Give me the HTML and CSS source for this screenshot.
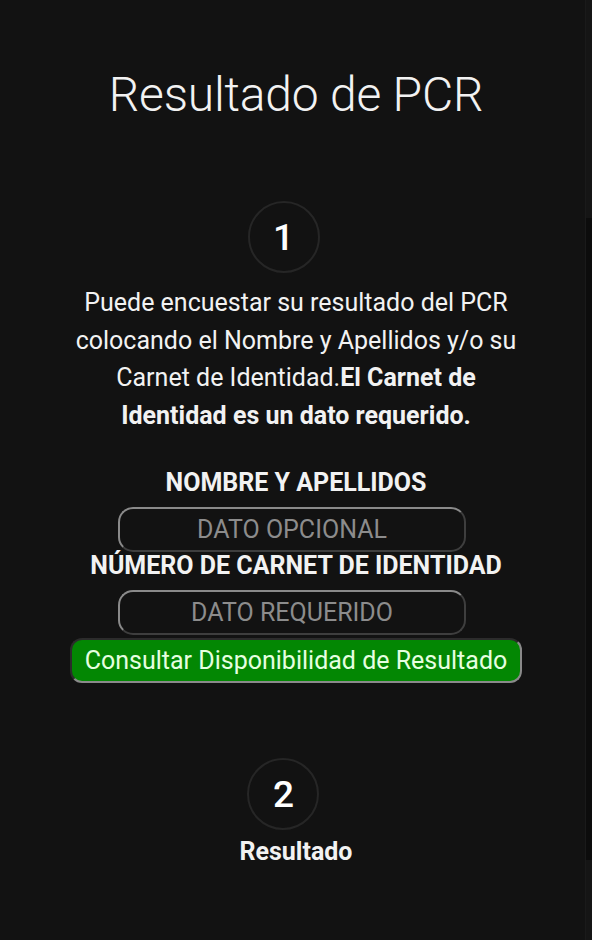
FILE: index.html
```html
<!DOCTYPE html>
<html lang="es">
<head>
    <meta charset="UTF-8">
    <meta name="viewport" content="width=device-width, initial-scale=1.0">
    <title>Resultado de PCR</title>
    <link rel="stylesheet" href="styles.css">
</head>
<body>
    <div class="page">
        <h1 class="title">Resultado de PCR</h1>

        <div class="step">
            <div class="step-number">1</div>
            <p class="intro">Puede encuestar su resultado del PCR colocando el Nombre y Apellidos y/o su Carnet de Identidad.<b>El Carnet de Identidad es un dato requerido.</b></p>

            <form class="search-form">
                <label class="field-label" for="nombre">NOMBRE Y APELLIDOS</label>
                <input class="field" id="nombre" type="text" placeholder="DATO OPCIONAL">
                <label class="field-label" for="carnet">NÚMERO DE CARNET DE IDENTIDAD</label>
                <input class="field" id="carnet" type="text" placeholder="DATO REQUERIDO">
                <button class="button" type="button">Consultar Disponibilidad de Resultado</button>
            </form>
        </div>

        <div class="step step-two">
            <div class="step-number">2</div>
            <h2 class="step-title">Resultado</h2>
        </div>
    </div>
    <div class="scrollbar"><div class="scrollbar-thumb"></div></div>
</body>
</html>
```

FILE: styles.css
```css
html, body {
    margin: 0;
    padding: 0;
    background-color: #121212;
}
body {
    font-family: Roboto, "Noto Sans", sans-serif;
    color: #f2f2f2;
    min-height: 940px;
}
.page {
    width: 592px;
    display: flex;
    flex-direction: column;
    align-items: center;
}
.title {
    font-weight: 300;
    font-size: 48px;
    margin: 66px 0 0;
    line-height: 58px;
    letter-spacing: -0.2px;
}
.step {
    display: flex;
    flex-direction: column;
    align-items: center;
}
.step-number {
    width: 68px;
    height: 68px;
    border: 2px solid #262626;
    border-radius: 50%;
    display: flex;
    align-items: center;
    justify-content: center;
    font-size: 37px;
    font-weight: 500;
    color: #fff;
    margin: 77px 25px 0 0;
}
.intro {
    width: 455px;
    text-align: center;
    font-size: 25px;
    line-height: 37.5px;
    margin: 11px 0 0;
}
.intro b {
    font-weight: 700;
}
.search-form {
    display: flex;
    flex-direction: column;
    align-items: center;
    margin-top: 34px;
}
.field-label {
    font-weight: 700;
    font-size: 25px;
    line-height: 30px;
}
.field {
    box-sizing: border-box;
    width: 348px;
    height: 45px;
    margin: 9px 8px 0 0;
    border: 2px solid;
    border-color: #8a8a8a #3e3e3e #3e3e3e #8a8a8a;
    border-radius: 15px;
    background: #121212;
    color: #ddd;
    font-family: Roboto, sans-serif;
    font-size: 25px;
    text-align: center;
    padding: 0;
}
.field::placeholder {
    color: #8c8c8c;
}
.field + .field-label {
    margin-top: -1px;
}
.button {
    box-sizing: border-box;
    width: 452px;
    height: 45px;
    margin-top: 3px;
    padding: 0;
    background-color: #038703;
    color: #e6ffe0;
    border: 2px solid;
    border-color: #2c2c2c #8a8a8a #8a8a8a #2c2c2c;
    border-radius: 12px;
    font-family: Roboto, sans-serif;
    font-size: 25px;
    cursor: pointer;
}
.step-two .step-number {
    margin-top: 75px;
}
.step-title {
    font-size: 25px;
    font-weight: 700;
    margin: 7px 0 0;
    line-height: 30px;
}
.scrollbar {
    position: fixed;
    top: 0;
    right: 0;
    width: 6px;
    height: 940px;
    background: #151515;
    border-left: 1px solid #1a1a1a;
}
.scrollbar-thumb {
    margin-top: 218px;
    height: 642px;
    background: #0c0c0c;
}
```
